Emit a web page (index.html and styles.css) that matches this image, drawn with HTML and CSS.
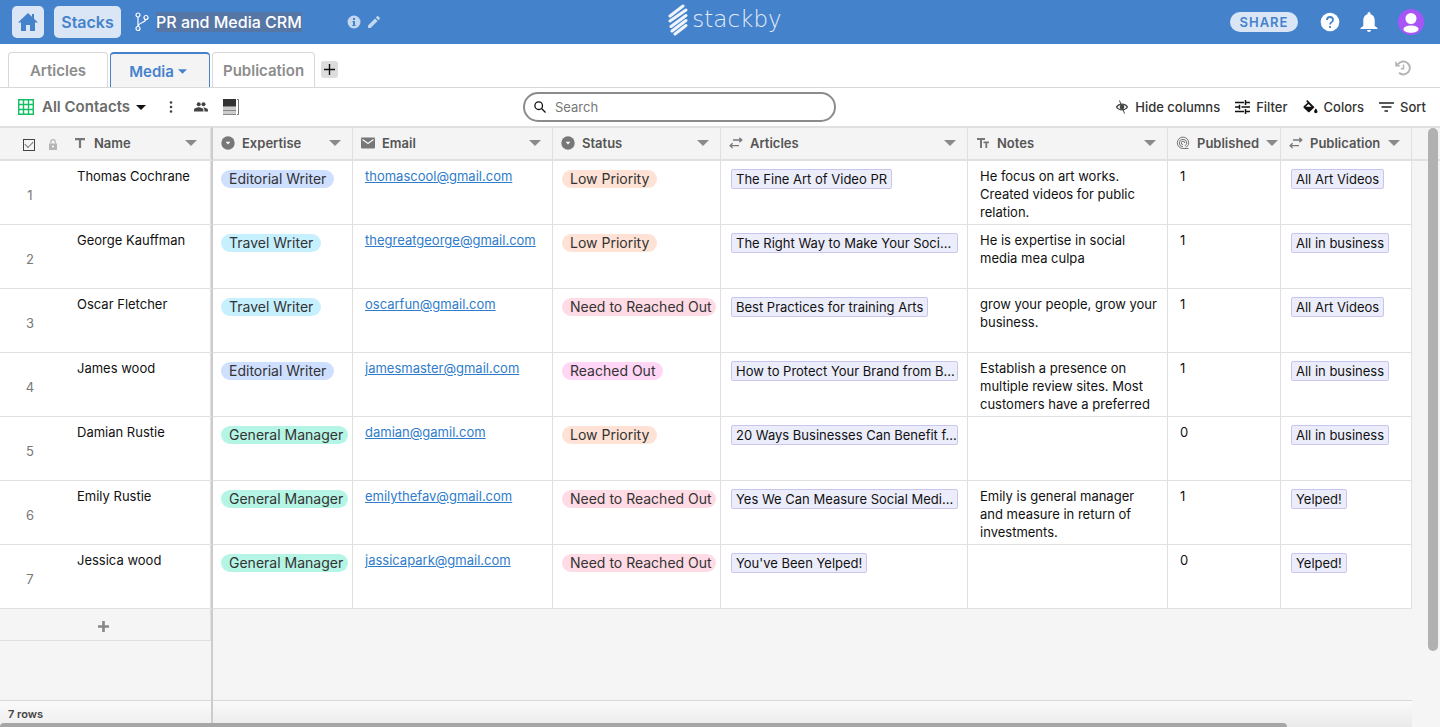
FILE: index.html
```html
<!DOCTYPE html>
<html lang="en">

<head>
    <meta charset="utf-8">
    <meta name="viewport" content="width=device-width, initial-scale=1">
    <title>PR and Media CRM - Stackby</title>
    <link rel="stylesheet" href="styles.css">
</head>

<body>
    <!-- shared icons -->
    <svg class="sprite" aria-hidden="true">
        <symbol id="caret" viewBox="0 0 12 6"><path d="M0 0h12L6 6z" /></symbol>
        <symbol id="select" viewBox="0 0 14 14"><circle cx="7" cy="7" r="6.700" /><path d="M4.600 5.800h4.800L7 8.400z" fill="#fff" /></symbol>
        <symbol id="link" viewBox="0 0 14 12"><path d="M4 3h8.500M10.300.700L12.800 3l-2.500 2.300M10 8.700H1.200M3.600 6.300L1.100 8.700l2.500 2.400" fill="none" stroke="currentColor" stroke-width="1.300" /></symbol>
    </svg>

    <header class="topbar">
        <div class="topbar-left">
            <button class="top-button home" aria-label="Home">
                <svg width="20" height="18" viewBox="0 0 20 18"><path d="M10 0L0 9.500h3V18h5v-6h4v6h5V9.500h3L16 5.700V1h-2v2.800z" /></svg>
            </button>
            <a class="top-button stacks" href="#">Stacks</a>
            <svg class="branch" width="14" height="20" viewBox="0 0 14 20" fill="none" stroke="#fff" stroke-width="1.200">
                <circle cx="3" cy="3" r="2" /><circle cx="3" cy="16.500" r="2" /><circle cx="11" cy="5.500" r="2" />
                <path d="M3 5v9.500M10.700 7.500C10.500 11 3.500 10 3.200 14.500" />
            </svg>
            <h1><span>PR and Media CRM</span></h1>
            <button class="icon-button" aria-label="Stack info">
                <svg width="14" height="14" viewBox="0 0 14 14"><circle cx="7" cy="7" r="6.500" fill="#c3d7ef" /><path d="M6 3h2v2H6zM5.500 6H8v4h.700v1H5.300v-1H6V7h-.5z" fill="#4582cc" /></svg>
            </button>
            <button class="icon-button" aria-label="Rename stack">
                <svg width="14" height="14" viewBox="0 0 14 14" fill="#c3d7ef"><path d="M1 10.400V13h2.600l7-7L8 3.400zM12.700 3.900a.8.8 0 000-1.100l-1.500-1.500a.8.8 0 00-1.100 0L8.800 2.600l2.600 2.600z" /></svg>
            </button>
        </div>
        <a class="logo" href="#">
            <svg width="24" height="34" viewBox="0 0 24 34" fill="none" stroke="#f0f5fc" stroke-width="3" stroke-linecap="round">
                <path d="M4 14L17 4M4 19L20 8M5 24.500L20 13.500M6 29L20 18.500M9 32L20 23.500" />
            </svg>
            <span>stackby</span>
        </a>
        <div class="topbar-right">
            <button class="share">SHARE</button>
            <button class="icon-button" aria-label="Help">
                <svg width="20" height="20" viewBox="0 0 20 20"><circle cx="10" cy="10" r="9.300" fill="#fff" /><path d="M7 8a3 3 0 116 0c0 2-3 2.300-3 4.500M10 14v2" fill="none" stroke="#4582cc" stroke-width="1.800" /></svg>
            </button>
            <button class="icon-button" aria-label="Notifications">
                <svg width="18" height="20" viewBox="0 0 18 20" fill="#fff"><path d="M7.500 2.300V1.500a1.500 1.500 0 013 0v.8C13 3 14.700 5.300 14.700 8v6l2.800 2v1H.5v-1l2.800-2V8c0-2.700 1.700-5 4.200-5.700zM7 18h4a2 2 0 01-4 0z" /></svg>
            </button>
            <button class="icon-button" aria-label="Account">
                <svg width="26" height="26" viewBox="0 0 26 26"><circle cx="13" cy="13" r="13" fill="#a855f7" /><circle cx="13" cy="9.500" r="5.500" fill="#fff" /><path d="M5.500 20.500c0-3 4-4 7.500-4s7.500 1 7.500 4c0 1.500-3.500 3.300-7.500 3.300s-7.500-1.800-7.500-3.300z" fill="#fff" /></svg>
            </button>
        </div>
    </header>

    <nav class="tabs">
        <a class="tab" href="#">Articles</a>
        <a class="tab active" href="#">Media <svg width="9" height="5"><use href="#caret" /></svg></a>
        <a class="tab" href="#">Publication</a>
        <button class="add-tab" aria-label="Add table">
            <svg width="11" height="11" viewBox="0 0 11 11" stroke="#111" stroke-width="1.400"><path d="M5.500 0v11M0 5.500h11" /></svg>
        </button>
        <button class="icon-button history" aria-label="History">
            <svg width="18" height="18" viewBox="0 0 18 18" fill="none" stroke="#b4b4b4" stroke-width="2"><path d="M4.200 5A6.500 6.500 0 115 13.800" /><path d="M1.200 2v5.500h5.500z" fill="#b4b4b4" stroke="none" /><path d="M9.500 5.500v4.300H6.800" stroke-width="1.500" /></svg>
        </button>
    </nav>

    <div class="toolbar">
        <div class="view">
            <button class="view-name">
                <svg width="16" height="16" viewBox="0 0 16 16" fill="none" stroke="#12bf63" stroke-width="1.400"><path d="M.7.700h14.600v14.600H.7zM5.500.700v14.600M10.500.700v14.600M.7 5.500h14.600M.7 10.500h14.600" /></svg>
                All Contacts
                <svg class="view-caret" width="10" height="5"><use href="#caret" /></svg>
            </button>
            <button class="icon-button" aria-label="View options">
                <svg width="4" height="12" viewBox="0 0 4 12" fill="#444"><circle cx="2" cy="1.500" r="1.300" /><circle cx="2" cy="6" r="1.300" /><circle cx="2" cy="10.500" r="1.300" /></svg>
            </button>
            <button class="icon-button" aria-label="Collaborators">
                <svg width="14" height="10" viewBox="0 0 14 10" fill="#444"><circle cx="4.700" cy="2.300" r="2" /><circle cx="9.500" cy="2.300" r="2" /><path d="M0 9.500V8c0-1.700 3-2.700 4.700-2.700S9.400 6.300 9.400 8v1.500zM10.400 9.500V8c0-1-.5-1.900-1.300-2.600C11 5.300 14 6.300 14 8v1.500z" /></svg>
            </button>
            <button class="icon-button" aria-label="Row height">
                <svg width="16" height="16" viewBox="0 0 16 16"><path d="M0 0h13v7H0z" fill="#333" /><path d="M0 8h13v3H0zM0 12h13v3H0z" fill="#ccc" /><path d="M0 7.500h13M0 11.500h13M0 15.500h13" stroke="#888" /><path d="M14 .5h1.500v15H14" fill="none" stroke="#777" /></svg>
            </button>
        </div>
        <label class="search">
            <svg width="12" height="12" viewBox="0 0 12 12" fill="none" stroke="#111" stroke-width="1.300"><circle cx="4.700" cy="4.700" r="3.800" /><path d="M7.500 7.500l4 4" /></svg>
            <input type="text" placeholder="Search" aria-label="Search">
        </label>
        <div class="actions">
            <button class="action">
                <svg width="14" height="14" viewBox="0 0 14 14" fill="none" stroke="#444" stroke-width="1.300"><path d="M1.500 7C4 3.200 10 3.200 12.500 7 10 10.800 4 10.800 1.500 7z" /><circle cx="7" cy="7" r="1.700" fill="#444" /><path d="M4.500.5l5 13" stroke-width="1" /></svg>
                Hide columns
            </button>
            <button class="action">
                <svg width="15" height="14" viewBox="0 0 15 14" fill="none" stroke="#111" stroke-width="1.500"><path d="M0 2.500h9M10.500 0v5M10.500 2.500H15M0 7h4M4.500 4.700v4.600M6.500 7H15M0 11.500h9M10.500 9v5M10.500 11.500H15" /></svg>
                Filter
            </button>
            <button class="action">
                <svg width="15" height="14" viewBox="0 0 15 14" fill="#111"><path d="M4.300 0l7.200 7.300-5 4.700c-.4.400-1 .4-1.400 0L.7 7.700c-.4-.4-.4-1 0-1.400l3.900-3.600L3.200 1zM5.500 4L2.600 6.800h5.800zM12.800 8.500s1.700 1.900 1.700 3a1.700 1.700 0 01-3.400 0c0-1.100 1.700-3 1.700-3z" /></svg>
                Colors
            </button>
            <button class="action">
                <svg width="15" height="10" viewBox="0 0 15 10" fill="none" stroke="#222" stroke-width="1.600"><path d="M0 1h15M2.500 5h10M5.500 9h3.500" /></svg>
                Sort
            </button>
        </div>
    </div>

    <main class="grid">
        <table>
            <colgroup>
                <col class="col-number"><col class="col-name"><col class="col-expertise"><col class="col-email">
                <col class="col-status"><col class="col-articles"><col class="col-notes"><col class="col-published">
                <col class="col-publication"><col>
            </colgroup>
            <thead>
                <tr>
                    <th class="select-all">
                        <div class="head">
                            <input type="checkbox" checked aria-label="Select all rows">
                            <svg width="8" height="11" viewBox="0 0 8 11"><path d="M0 4.500h8V11H0z" fill="#b5b5b5" /><path d="M1.800 4.500V2.800a2.200 2.200 0 014.400 0v1.700" fill="none" stroke="#b5b5b5" stroke-width="1.200" /><circle cx="4" cy="7.500" r="1" fill="#fff" /></svg>
                        </div>
                    </th>
                    <th class="pinned">
                        <div class="head"><svg class="type" width="14" height="14" viewBox="0 0 14 14"><path d="M2 2h10v2.200H8.100V12H5.900V4.200H2z" /></svg>Name<svg class="caret" width="12" height="6"><use href="#caret" /></svg></div>
                    </th>
                    <th>
                        <div class="head"><svg class="type" width="14" height="14"><use href="#select" /></svg>Expertise<svg class="caret" width="12" height="6"><use href="#caret" /></svg></div>
                    </th>
                    <th>
                        <div class="head"><svg class="type" width="14" height="14" viewBox="0 0 14 14"><rect y="1.500" width="14" height="11" rx="1" /><path d="M1.500 3.500L7 7.500l5.500-4" fill="none" stroke="#f4f4f4" stroke-width="1.300" /></svg>Email<svg class="caret" width="12" height="6"><use href="#caret" /></svg></div>
                    </th>
                    <th>
                        <div class="head"><svg class="type" width="14" height="14"><use href="#select" /></svg>Status<svg class="caret" width="12" height="6"><use href="#caret" /></svg></div>
                    </th>
                    <th>
                        <div class="head"><svg class="type" width="14" height="12"><use href="#link" /></svg>Articles<svg class="caret" width="12" height="6"><use href="#caret" /></svg></div>
                    </th>
                    <th>
                        <div class="head"><svg class="type" width="14" height="14" viewBox="0 0 14 14"><path d="M1 2h8v2H6v8H4V4H1zM7.500 5.500H13v1.800h-1.800V12H9.400V7.300H7.500z" /></svg>Notes<svg class="caret" width="12" height="6"><use href="#caret" /></svg></div>
                    </th>
                    <th>
                        <div class="head tight"><svg class="type outline" width="14" height="14" viewBox="0 0 14 14"><path d="M12.500 12.500H7A5.700 5.700 0 1112.700 7c0 2-1.200 3.600-3 4.200M7 10.700A3.700 3.700 0 1110.700 7c0 1.500-1 2.400-2 2.600M7 8.600A1.700 1.700 0 118.700 7" /></svg>Published<svg class="caret" width="12" height="6"><use href="#caret" /></svg></div>
                    </th>
                    <th>
                        <div class="head"><svg class="type" width="14" height="12"><use href="#link" /></svg>Publication<svg class="caret" width="12" height="6"><use href="#caret" /></svg></div>
                    </th>
                    <th class="filler"></th>
                </tr>
            </thead>
            <tbody>
                <tr>
                    <td class="number">1</td>
                    <td class="pinned">Thomas Cochrane</td>
                    <td class="tags"><span class="tag blue">Editorial Writer</span></td>
                    <td><a href="mailto:thomascool@gmail.com">thomascool@gmail.com</a></td>
                    <td class="tags status"><span class="tag orange">Low Priority</span></td>
                    <td class="records"><span class="record">The Fine Art of Video PR</span></td>
                    <td class="notes"><p class="note">He focus on art works. Created videos for public relation.</p></td>
                    <td>1</td>
                    <td class="records"><span class="record">All Art Videos</span></td>
                    <td class="filler"></td>
                </tr>
                <tr>
                    <td class="number">2</td>
                    <td class="pinned">George Kauffman</td>
                    <td class="tags"><span class="tag cyan">Travel Writer</span></td>
                    <td><a href="mailto:thegreatgeorge@gmail.com">thegreatgeorge@gmail.com</a></td>
                    <td class="tags status"><span class="tag orange">Low Priority</span></td>
                    <td class="records"><span class="record full">The Right Way to Make Your Soci...</span></td>
                    <td class="notes"><p class="note">He is expertise in social media mea culpa</p></td>
                    <td>1</td>
                    <td class="records"><span class="record">All in business</span></td>
                    <td class="filler"></td>
                </tr>
                <tr>
                    <td class="number">3</td>
                    <td class="pinned">Oscar Fletcher</td>
                    <td class="tags"><span class="tag cyan">Travel Writer</span></td>
                    <td><a href="mailto:oscarfun@gmail.com">oscarfun@gmail.com</a></td>
                    <td class="tags status"><span class="tag pink">Need to Reached Out</span></td>
                    <td class="records"><span class="record">Best Practices for training Arts</span></td>
                    <td class="notes"><p class="note">grow your people, grow your business.</p></td>
                    <td>1</td>
                    <td class="records"><span class="record">All Art Videos</span></td>
                    <td class="filler"></td>
                </tr>
                <tr>
                    <td class="number">4</td>
                    <td class="pinned">James wood</td>
                    <td class="tags"><span class="tag blue">Editorial Writer</span></td>
                    <td><a href="mailto:jamesmaster@gmail.com">jamesmaster@gmail.com</a></td>
                    <td class="tags status"><span class="tag magenta">Reached Out</span></td>
                    <td class="records"><span class="record full">How to Protect Your Brand from B...</span></td>
                    <td class="notes"><p class="note">Establish a presence on multiple review sites. Most customers have a preferred</p></td>
                    <td>1</td>
                    <td class="records"><span class="record">All in business</span></td>
                    <td class="filler"></td>
                </tr>
                <tr>
                    <td class="number">5</td>
                    <td class="pinned">Damian Rustie</td>
                    <td class="tags"><span class="tag teal">General Manager</span></td>
                    <td><a href="mailto:damian@gamil.com">damian@gamil.com</a></td>
                    <td class="tags status"><span class="tag orange">Low Priority</span></td>
                    <td class="records"><span class="record full">20 Ways Businesses Can Benefit f...</span></td>
                    <td class="notes"></td>
                    <td>0</td>
                    <td class="records"><span class="record">All in business</span></td>
                    <td class="filler"></td>
                </tr>
                <tr>
                    <td class="number">6</td>
                    <td class="pinned">Emily Rustie</td>
                    <td class="tags"><span class="tag teal">General Manager</span></td>
                    <td><a href="mailto:emilythefav@gmail.com">emilythefav@gmail.com</a></td>
                    <td class="tags status"><span class="tag pink">Need to Reached Out</span></td>
                    <td class="records"><span class="record full">Yes We Can Measure Social Medi...</span></td>
                    <td class="notes"><p class="note">Emily is general manager and measure in return of investments.</p></td>
                    <td>1</td>
                    <td class="records"><span class="record">Yelped!</span></td>
                    <td class="filler"></td>
                </tr>
                <tr>
                    <td class="number">7</td>
                    <td class="pinned">Jessica wood</td>
                    <td class="tags"><span class="tag teal">General Manager</span></td>
                    <td><a href="mailto:jassicapark@gmail.com">jassicapark@gmail.com</a></td>
                    <td class="tags status"><span class="tag pink">Need to Reached Out</span></td>
                    <td class="records"><span class="record">You've Been Yelped!</span></td>
                    <td class="notes"></td>
                    <td>0</td>
                    <td class="records"><span class="record">Yelped!</span></td>
                    <td class="filler"></td>
                </tr>
            </tbody>
        </table>
        <div class="below">
            <div class="below-pinned">
                <button class="add-row" aria-label="Add row">
                    <svg width="11" height="11" viewBox="0 0 11 11" stroke="#888" stroke-width="2.600"><path d="M5.500 0v11M0 5.500h11" /></svg>
                </button>
            </div>
        </div>
        <footer class="summary">
            <div class="row-count">7 rows</div>
            <div class="summary-rest"></div>
        </footer>
        <div class="scroll-y"></div>
        <div class="scroll-x"></div>
    </main>
</body>

</html>
```
FILE: styles.css
```css
* {
    box-sizing: border-box;
}

body {
    font-family: Inter, "Liberation Sans", sans-serif;
    font-size: 13px;
    line-height: 18px;
    color: #111;
    background: #fff;
    margin: 0;
    min-height: 100vh;
    display: flex;
    flex-direction: column;
}

button {
    font: inherit;
    color: inherit;
    background: none;
    border: none;
    padding: 0;
    cursor: pointer;
}

a {
    text-decoration: none;
}

svg {
    flex-shrink: 0;
}

.sprite {
    position: absolute;
    width: 0;
    height: 0;
}

.icon-button {
    display: flex;
}

/* top bar */
.topbar {
    display: grid;
    grid-template-columns: 655fr auto 643fr;
    align-items: center;
    height: 44px;
    padding: 0 16px 0 12px;
    background: #4582cc;
    color: #fff;
}

.topbar-left,
.topbar-right {
    display: flex;
    align-items: center;
}

.top-button {
    display: flex;
    align-items: center;
    justify-content: center;
    height: 32px;
    border-radius: 5px;
    background: #dae6f5;
    color: #4582cc;
}

.home {
    width: 32px;
    fill: #4582cc;
}

.stacks {
    width: 67px;
    margin-left: 10px;
    font-size: 16px;
    font-weight: 600;
}

.branch {
    margin: 0 7px 0 14px;
}

h1 {
    width: 191px;
    margin: 0;
    font-size: 16px;
    line-height: 18px;
    font-weight: 500;
    white-space: nowrap;
}

h1 span {
    background: #5676a6;
}

.topbar-left .icon-button + .icon-button {
    margin-left: 6px;
}

.logo {
    display: flex;
    align-items: center;
    gap: 2px;
    height: 44px;
    padding-bottom: 6px;
    color: #e4edf8;
    font-family: "DejaVu Sans Light", "DejaVu Sans ExtraLight", "DejaVu Sans", sans-serif;
    font-size: 23px;
    font-weight: 200;
    line-height: 32px;
}

.topbar-right {
    justify-content: flex-end;
    gap: 20px;
}

.share {
    width: 68px;
    height: 20px;
    margin-right: 2px;
    border-radius: 10px;
    background: #dae6f5;
    color: #4582cc;
    font-weight: 600;
    letter-spacing: 1px;
}

/* table tabs */
.tabs {
    display: flex;
    align-items: flex-end;
    gap: 2px;
    height: 44px;
    padding: 0 28px 0 8px;
    border-bottom: 1px solid #d8d8d8;
}

.tab {
    display: flex;
    align-items: center;
    justify-content: center;
    gap: 4px;
    min-width: 100px;
    height: 35px;
    padding: 2px 10px 0;
    border: 1px solid #d8d8d8;
    border-bottom: none;
    border-radius: 4px 4px 0 0;
    color: #8c8c8c;
    font-size: 15px;
    font-weight: 600;
}

.tab.active {
    padding-right: 14px;
    border: 2px solid #4582cc;
    border-width: 2px 1px 0;
    background: #f4f4f4;
    color: #4582cc;
    fill: #4582cc;
}

.add-tab {
    display: flex;
    align-items: center;
    justify-content: center;
    width: 17px;
    height: 17px;
    margin: 0 0 9px 4px;
    border-radius: 3px;
    background: #ddd;
}

.history {
    margin: 0 0 10px auto;
}

/* view toolbar */
.toolbar {
    display: grid;
    grid-template-columns: 505fr 313px 590fr;
    align-items: center;
    height: 38px;
    padding: 0 14px 0 18px;
}

.view {
    display: flex;
    align-items: center;
}

.view .icon-button {
    margin-left: 13px;
}

.view-name {
    display: flex;
    align-items: center;
    gap: 8px;
    margin-right: 10px;
    color: #6b6b6b;
    font-size: 15px;
    font-weight: 600;
}

.view-caret {
    fill: #111;
    margin-left: -2px;
}

.view .icon-button + .icon-button {
    margin-left: 21px;
}

.view .icon-button:last-child {
    margin-left: 15px;
}

.search {
    display: flex;
    align-items: center;
    gap: 9px;
    height: 30px;
    padding: 0 9px;
    border: 2px solid #8c8c8c;
    border-radius: 15px;
}

.search input {
    flex: 1;
    min-width: 0;
    padding: 0;
    border: none;
    outline: none;
    background: none;
    font: inherit;
}

.search input::placeholder {
    color: #777;
    opacity: 1;
}

.actions {
    display: flex;
    justify-content: flex-end;
    gap: 15px;
}

.action {
    display: flex;
    align-items: center;
    gap: 6px;
    color: #333;
    font-weight: 500;
    white-space: nowrap;
}

/* grid */
.grid {
    position: relative;
    flex: 1;
    display: flex;
    flex-direction: column;
    background: #f5f5f5;
}

table {
    width: 100%;
    table-layout: fixed;
    border-collapse: separate;
    border-spacing: 0;
}

.col-number { width: 65px; }
.col-name { width: 148px; }
.col-expertise { width: 140px; }
.col-email { width: 200px; }
.col-status { width: 168px; }
.col-articles { width: 247px; }
.col-notes { width: 200px; }
.col-published { width: 113px; }
.col-publication { width: 131px; }

th {
    height: 35px;
    padding: 0 11px 1px 8px;
    border: 2px solid #e0e0e0;
    border-width: 2px 1px 2px 0;
    background: #f4f4f4;
    color: #555;
    font-weight: 600;
    text-align: left;
}

.head {
    display: flex;
    align-items: center;
    gap: 7px;
}

.head.tight {
    margin-right: -6px;
}

.type {
    fill: #777;
    color: #777;
}

.type.outline {
    fill: none;
    stroke: #777;
}

.caret {
    fill: #8a8a8a;
    margin-left: auto;
}

th.select-all {
    border-right: none;
    padding: 2px 7px 0 23px;
}

.select-all .head {
    gap: 14px;
}

.select-all input {
    appearance: none;
    width: 12px;
    height: 12px;
    margin: 0;
    border: 1px solid #444;
    display: flex;
    align-items: center;
    justify-content: center;
}

.select-all input:checked::before {
    content: "";
    width: 7px;
    height: 4px;
    border: solid #777;
    border-width: 0 0 1px 1px;
    transform: rotate(-45deg);
    margin-bottom: 2px;
}

td {
    height: 64px;
    padding: 6px 12px 0;
    border: 1px solid #e0e0e0;
    border-width: 0 1px 1px 0;
    background: #fff;
    vertical-align: top;
    white-space: nowrap;
}

td.number {
    padding: 4px 5px 0 0;
    border-right: none;
    color: #777;
    text-align: center;
    vertical-align: middle;
}

th.pinned,
td.pinned {
    border-right: 2px solid #ccc;
    box-shadow: inset -1px 0 #e0e0e0;
}

th.pinned {
    padding-right: 14px;
}

td a {
    color: #2f7ccb;
    text-decoration: underline;
}

td.tags {
    padding: 9px 4px 0 8px;
}

td.status {
    padding-left: 9px;
}

td.records {
    padding: 8px 9px 0 10px;
}

td.notes {
    padding-right: 8px;
}

th.filler {
    border-right: none;
}

td.filler {
    border: none;
    background: #f5f5f5;
}

.tag {
    display: block;
    width: fit-content;
    max-width: 100%;
    height: 18px;
    padding: 0 8px;
    border-radius: 9px;
    color: #333;
    font-size: 14px;
}

.blue { background: #cfdfff; }
.cyan { background: #c7f0ff; }
.teal { background: #b5f5e5; }
.orange { background: #fee2d5; }
.pink { background: #ffdce5; }
.magenta { background: #ffd6f6; }

.record {
    display: block;
    width: fit-content;
    height: 20px;
    padding: 0 4px;
    border: 1px solid #c9c5ee;
    border-radius: 2px;
    background: #ecedfb;
}

.record.full {
    width: 100%;
}

.note {
    height: 54px;
    margin: 0;
    white-space: normal;
    overflow: hidden;
}

.below {
    flex: 1;
    display: flex;
}

.below-pinned {
    width: 213px;
    border-right: 2px solid #ccc;
}

.add-row {
    display: flex;
    align-items: center;
    justify-content: center;
    width: 100%;
    height: 32px;
    padding: 3px 4px 0 0;
    border: 1px solid #e0e0e0;
    border-width: 0 1px 1px 0;
}

.summary {
    display: flex;
    height: 27px;
    padding-right: 28px;
}

.row-count {
    width: 213px;
    padding: 4px 8px 0;
    border-top: 1px solid #d8d8d8;
    border-right: 2px solid #ccc;
    background: linear-gradient(#fafafa, #eee);
    color: #444;
    font-size: 11px;
    font-weight: 600;
}

.summary-rest {
    flex: 1;
    border-top: 1px solid #d8d8d8;
    background: linear-gradient(#fafafa, #eaeaea);
}

/* scrollbars drawn over the grid */
.scroll-y {
    position: absolute;
    top: 2px;
    right: 2px;
    bottom: 76px;
    width: 10px;
    border-radius: 5px;
    background: #b1b1b1;
}

.scroll-x {
    position: absolute;
    left: 0;
    right: 153px;
    bottom: 0;
    height: 4px;
    border-radius: 4px 4px 0 0;
    background: #a6a6a6;
}
```
